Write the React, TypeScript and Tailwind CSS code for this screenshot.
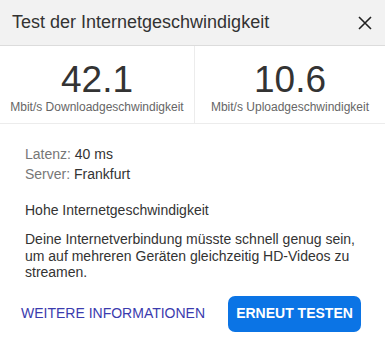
import React from "react";

const App: React.FC = () => {
    return (
        <div className="w-[385px] h-[344px] bg-white font-['Liberation_Sans',Arial,sans-serif] text-[#333]">
            <div className="h-[46px] bg-[#f2f2f2] border-b border-[#dcdcdc] flex items-center justify-between pl-3 pr-[10px]">
                <span className="text-[18px] text-[#333]">Test der Internetgeschwindigkeit</span>
                <button className="w-5 h-5 flex items-center justify-center" aria-label="Schließen">
                    <svg width="14" height="14" viewBox="0 0 14 14">
                        <path d="M1 1L13 13M13 1L1 13" stroke="#222" strokeWidth="1.6" />
                    </svg>
                </button>
            </div>

            <div className="grid grid-cols-[195px_1fr] h-[78px] border-b border-[#ececec]">
                <div className="flex flex-col items-center pt-[15px] border-r border-[#ececec]">
                    <span className="text-[37px] leading-[37px] text-[#333]">42.1</span>
                    <span className="text-[12px] leading-[14px] mt-[2px] text-[#666]">Mbit/s Downloadgeschwindigkeit</span>
                </div>
                <div className="flex flex-col items-center pt-[15px]">
                    <span className="text-[37px] leading-[37px] text-[#333]">10.6</span>
                    <span className="text-[12px] leading-[14px] mt-[2px] text-[#666]">Mbit/s Uploadgeschwindigkeit</span>
                </div>
            </div>

            <div className="px-[25px] pt-[20px] text-[14px]">
                <div className="leading-[20px]">
                    <span className="text-[#777]">Latenz: </span>
                    <span className="text-[#333]">40 ms</span>
                </div>
                <div className="leading-[20px]">
                    <span className="text-[#777]">Server: </span>
                    <span className="text-[#333]">Frankfurt</span>
                </div>
                <p className="mt-[16px] leading-[20px]">Hohe Internetgeschwindigkeit</p>
                <p className="mt-[11px] leading-[16.5px]">
                    Deine Internetverbindung müsste schnell genug sein, um auf mehreren Geräten gleichzeitig HD-Videos zu streamen.
                </p>
            </div>

            <div className="flex items-center justify-between pl-[21px] pr-[24px] mt-[15px]">
                <button className="text-[14px] text-[#3b3bae]">WEITERE INFORMATIONEN</button>
                <button className="h-[36px] w-[133px] rounded-[7px] bg-[#0b74e5] text-white text-[14px] font-bold">
                    ERNEUT TESTEN
                </button>
            </div>
        </div>
    );
};

export default App;
